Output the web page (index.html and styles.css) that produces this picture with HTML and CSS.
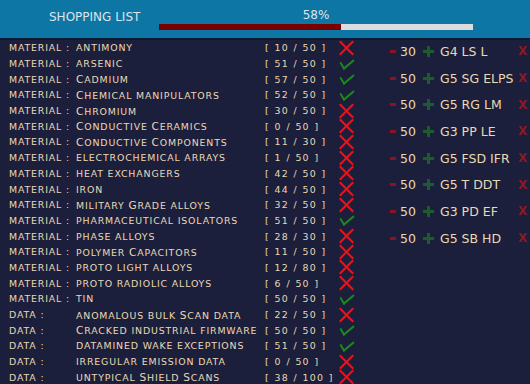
FILE: index.html
```html
<!DOCTYPE html>
<html>
<head>
<meta charset="utf-8">
<link rel="stylesheet" href="styles.css">
</head>
<body>
<header class="top">
  <div class="title">SHOPPING LIST</div>
  <div class="progress">
    <div class="pct">58%</div>
    <div class="bar"><div class="fill" style="width:58%"></div></div>
  </div>
</header>
<main class="main">
  <div class="list">
    <div class="row"><span class="type">MATERIAL :</span><span class="name">ANTIMONY</span><span class="count">[ 10 / 50 ]</span><span class="ic no"></span></div>
    <div class="row"><span class="type">MATERIAL :</span><span class="name">ARSENIC</span><span class="count">[ 51 / 50 ]</span><span class="ic ok"></span></div>
    <div class="row"><span class="type">MATERIAL :</span><span class="name"><b>C</b>ADMIUM</span><span class="count">[ 57 / 50 ]</span><span class="ic ok"></span></div>
    <div class="row"><span class="type">MATERIAL :</span><span class="name"><b>C</b>HEMICAL MANIPULATORS</span><span class="count">[ 52 / 50 ]</span><span class="ic ok"></span></div>
    <div class="row"><span class="type">MATERIAL :</span><span class="name"><b>C</b>HROMIUM</span><span class="count">[ 30 / 50 ]</span><span class="ic no"></span></div>
    <div class="row"><span class="type">MATERIAL :</span><span class="name"><b>C</b>ONDUCTIVE <b>C</b>ERAMICS</span><span class="count">[ 0 / 50 ]</span><span class="ic no"></span></div>
    <div class="row"><span class="type">MATERIAL :</span><span class="name"><b>C</b>ONDUCTIVE <b>C</b>OMPONENTS</span><span class="count">[ 11 / 30 ]</span><span class="ic no"></span></div>
    <div class="row"><span class="type">MATERIAL :</span><span class="name">ELECTROCHEMICAL ARRAYS</span><span class="count">[ 1 / 50 ]</span><span class="ic no"></span></div>
    <div class="row"><span class="type">MATERIAL :</span><span class="name">HEAT EXCHANGERS</span><span class="count">[ 42 / 50 ]</span><span class="ic no"></span></div>
    <div class="row"><span class="type">MATERIAL :</span><span class="name">IRON</span><span class="count">[ 44 / 50 ]</span><span class="ic no"></span></div>
    <div class="row"><span class="type">MATERIAL :</span><span class="name">MILITARY <b>G</b>RADE ALLOYS</span><span class="count">[ 32 / 50 ]</span><span class="ic no"></span></div>
    <div class="row"><span class="type">MATERIAL :</span><span class="name">PHARMACEUTICAL ISOLATORS</span><span class="count">[ 51 / 50 ]</span><span class="ic ok"></span></div>
    <div class="row"><span class="type">MATERIAL :</span><span class="name">PHASE ALLOYS</span><span class="count">[ 28 / 30 ]</span><span class="ic no"></span></div>
    <div class="row"><span class="type">MATERIAL :</span><span class="name">POLYMER <b>C</b>APACITORS</span><span class="count">[ 11 / 50 ]</span><span class="ic no"></span></div>
    <div class="row"><span class="type">MATERIAL :</span><span class="name">PROTO LIGHT ALLOYS</span><span class="count">[ 12 / 80 ]</span><span class="ic no"></span></div>
    <div class="row"><span class="type">MATERIAL :</span><span class="name">PROTO RADIOLIC ALLOYS</span><span class="count">[ 6 / 50 ]</span><span class="ic no"></span></div>
    <div class="row"><span class="type">MATERIAL :</span><span class="name">TIN</span><span class="count">[ 50 / 50 ]</span><span class="ic ok"></span></div>
    <div class="row"><span class="type">DATA :</span><span class="name">ANOMALOUS BULK <b>S</b>CAN DATA</span><span class="count">[ 22 / 50 ]</span><span class="ic no"></span></div>
    <div class="row"><span class="type">DATA :</span><span class="name"><b>C</b>RACKED INDUSTRIAL FIRMWARE</span><span class="count">[ 50 / 50 ]</span><span class="ic ok"></span></div>
    <div class="row"><span class="type">DATA :</span><span class="name">DATAMINED WAKE EXCEPTIONS</span><span class="count">[ 51 / 50 ]</span><span class="ic ok"></span></div>
    <div class="row"><span class="type">DATA :</span><span class="name">IRREGULAR EMISSION DATA</span><span class="count">[ 0 / 50 ]</span><span class="ic no"></span></div>
    <div class="row"><span class="type">DATA :</span><span class="name">UNTYPICAL <b>S</b>HIELD <b>S</b>CANS</span><span class="count">[ 38 / 100 ]</span><span class="ic no"></span></div>
  </div>
  <div class="mods">
    <div class="mod"><span class="minus"></span><span class="num">30</span><span class="plus"></span><span class="mname">G4 LS L</span><span class="del">X</span></div>
    <div class="mod"><span class="minus"></span><span class="num">50</span><span class="plus"></span><span class="mname">G5 SG ELPS</span><span class="del">X</span></div>
    <div class="mod"><span class="minus"></span><span class="num">50</span><span class="plus"></span><span class="mname">G5 RG LM</span><span class="del">X</span></div>
    <div class="mod"><span class="minus"></span><span class="num">50</span><span class="plus"></span><span class="mname">G3 PP LE</span><span class="del">X</span></div>
    <div class="mod"><span class="minus"></span><span class="num">50</span><span class="plus"></span><span class="mname">G5 FSD IFR</span><span class="del">X</span></div>
    <div class="mod"><span class="minus"></span><span class="num">50</span><span class="plus"></span><span class="mname">G5 T DDT</span><span class="del">X</span></div>
    <div class="mod"><span class="minus"></span><span class="num">50</span><span class="plus"></span><span class="mname">G3 PD EF</span><span class="del">X</span></div>
    <div class="mod"><span class="minus"></span><span class="num">50</span><span class="plus"></span><span class="mname">G5 SB HD</span><span class="del">X</span></div>
  </div>
</main>
</body>
</html>
```
FILE: styles.css
```css
* { box-sizing: border-box; }
html, body { margin: 0; padding: 0; }
body {
  width: 530px;
  height: 384px;
  overflow: hidden;
  background: #1b1f3c;
  font-family: "DejaVu Sans", sans-serif;
  color: #ead9b4;
}
.top {
  height: 40px;
  background: #0d76a4;
  border-bottom: 2px solid #0c1830;
  display: flex;
  align-items: flex-start;
}
.title {
  width: 159px;
  padding-left: 49px;
  padding-top: 10px;
  font-size: 12px;
  line-height: 14px;
  color: #dde4ec;
}
.progress {
  width: 314px;
  padding-top: 8px;
}
.pct {
  text-align: center;
  font-size: 12px;
  line-height: 14px;
  color: #dde4ec;
}
.bar {
  margin-top: 2px;
  height: 6px;
  background: #dcdcdc;
}
.fill {
  height: 100%;
  background: #7a0000;
}
.main {
  display: flex;
}
.list {
  width: 380px;
  padding-left: 9px;
}
.row {
  display: flex;
  align-items: center;
  height: 15.7px;
  font-size: 9.4px;
  white-space: nowrap;
}
.row b { font-weight: normal; font-size: 10.6px; }
.type { width: 67px; letter-spacing: 0.85px; }
.name { width: 189px; letter-spacing: 0.85px; }
.count { width: 74px; letter-spacing: 1.2px; word-spacing: 0.5px; }
.ic {
  width: 15px;
  height: 14px;
  position: relative;
}
.ic.no::before, .ic.no::after {
  content: "";
  position: absolute;
  left: -2px;
  top: 6px;
  width: 19px;
  height: 2px;
  background: #f01018;
  transform: rotate(45deg);
}
.ic.no::after { transform: rotate(-45deg); }
.ic.ok::before {
  content: "";
  position: absolute;
  left: 1px;
  top: 1px;
  width: 12px;
  height: 6px;
  border-left: 2px solid #1a8a1a;
  border-bottom: 2px solid #1a8a1a;
  transform: rotate(-40deg) skewX(-8deg);
  transform-origin: center;
}
.mods {
  margin-top: -2px;
  padding-left: 10px;
}
.mod {
  display: flex;
  align-items: center;
  height: 26.7px;
  font-size: 12.5px;
  white-space: nowrap;
}
.minus {
  width: 6px;
  height: 3px;
  background: #8c1422;
  margin-right: 4px;
}
.num { width: 23px; }
.plus {
  width: 11px;
  height: 11px;
  margin-right: 6px;
  background:
    linear-gradient(#1c5c2c, #1c5c2c) center / 11px 3px no-repeat,
    linear-gradient(#1c5c2c, #1c5c2c) center / 3px 11px no-repeat;
}
.mname { width: 78px; }
.del {
  color: #8c1828;
  font-weight: bold;
  font-size: 12px;
}
```
